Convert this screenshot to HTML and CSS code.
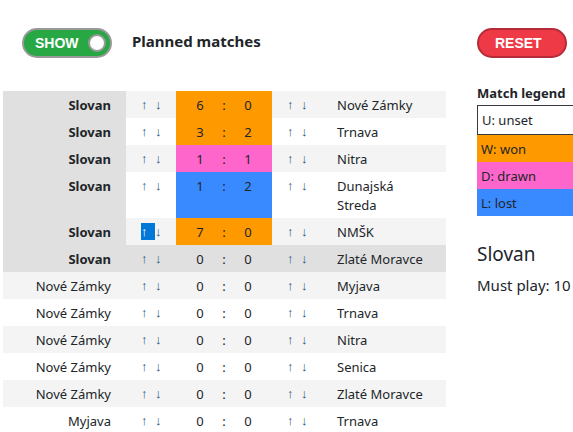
FILE: index.html
```html
<!DOCTYPE html>
<html lang="en">
<head>
<meta charset="utf-8">
<title>Planned matches</title>
<link rel="stylesheet" href="styles.css">
</head>
<body>
<main class="layout">
  <section class="planner">
    <header class="bar">
      <label class="pill show"><span>SHOW</span><input type="checkbox" class="knob" checked></label>
      <h1 class="title">Planned matches</h1>
    </header>
    <table class="matches">
      <colgroup><col class="c-home"><col class="c-move"><col class="c-goals"><col class="c-colon"><col class="c-goals"><col class="c-move-away"><col class="c-away"></colgroup>
      <tbody id="rows"></tbody>
    </table>
  </section>
  <aside class="side">
    <div class="bar"><button type="button" class="pill reset">RESET</button></div>
    <h2 class="legend-title">Match legend</h2>
    <ul class="legend">
      <li class="unset">U: unset</li>
      <li class="won">W: won</li>
      <li class="drawn">D: drawn</li>
      <li class="lost">L: lost</li>
    </ul>
    <h3 class="team">Slovan</h3>
    <p class="must">Must play: 10</p>
  </aside>
</main>
<script src="script.js"></script>
</body>
</html>
```
FILE: styles.css
```css
* {
  box-sizing: border-box;
}

html {
  overflow: hidden;
}

body {
  margin: 0;
  background: #fff;
  color: #212529;
  font-family: "Segoe UI", "Noto Sans", sans-serif;
  font-size: 13px;
  line-height: 19px;
}

h1, h2, h3, p, ul {
  margin: 0;
  padding: 0;
}

.layout {
  display: grid;
  grid-template-columns: 443fr 96fr;
  column-gap: 31px;
  padding: 28px 0 0 3px;
}

.bar {
  display: flex;
  align-items: flex-start;
  gap: 20px;
  height: 30px;
}

.planner .bar {
  padding-left: 19px;
  margin-bottom: 33px;
}

.side .bar {
  margin-bottom: 26px;
}

.title {
  font-size: 15px;
  line-height: 27px;
  font-weight: 700;
}

.pill {
  display: flex;
  align-items: center;
  flex: none;
  width: 90px;
  height: 30px;
  border-radius: 15px;
  color: #fff;
  font-family: "Liberation Sans", sans-serif;
  font-size: 14px;
  font-weight: 700;
}

.show {
  justify-content: space-between;
  padding: 0 4px 0 11px;
  border: 2px solid #999;
  background: #28a745;
}

.knob {
  appearance: none;
  width: 18px;
  height: 18px;
  margin: 0;
  border: 2px solid #999;
  border-radius: 50%;
  background: #fff;
}

.reset {
  padding: 0 0 0 16px;
  border: 2px solid #b52b37;
  background: #ee3a47;
}

.matches {
  width: 100%;
  table-layout: fixed;
  border-collapse: collapse;
}

.c-home { width: 123px; }
.c-move { width: 50px; }
.c-goals { width: 36px; }
.c-colon { width: 24px; }
.c-move-away { width: 57px; }

.matches th,
.matches td {
  padding: 5px 0 3px;
  vertical-align: top;
  text-align: center;
}

.matches .home {
  padding-right: 15px;
  text-align: right;
  font-weight: 400;
}

.matches .move {
  padding-left: 15px;
  text-align: left;
}

.matches .first {
  padding-left: 12px;
}

.matches .last {
  padding-right: 12px;
}

.matches .away {
  padding-left: 8px;
  padding-right: 20px;
  text-align: left;
}

.matches tr:nth-child(odd) {
  background: #f4f4f4;
}

.matches .picked .home {
  background: #e0e0e0;
  font-weight: 700;
}

.matches tr.current {
  background: #e0e0e0;
}

.arrow {
  display: inline-block;
  width: 14px;
  height: 17px;
  color: #23527c;
  font-family: "Liberation Sans", sans-serif;
  font-size: 13px;
  line-height: 17px;
  text-decoration: none;
  vertical-align: top;
}

.marked {
  background: #0078d7;
  color: #fff;
}

.matches .won, .won { background: #ff9900; }
.matches .drawn, .drawn { background: #ff66cc; }
.matches .lost, .lost { background: #3a8aff; }

.legend-title {
  margin-bottom: 2px;
  font-size: 13px;
  line-height: 19px;
}

.legend {
  list-style: none;
}

.legend li {
  padding: 5px 4px 3px;
}

.legend .unset {
  padding-bottom: 4px;
  border: 1px solid #343a40;
  border-right: 0;
}

.team {
  margin: 25px 0 7px;
  font-size: 19px;
  line-height: 27px;
  font-weight: 400;
}

.must {
  font-size: 15px;
  line-height: 21px;
  white-space: nowrap;
}
```
FILE: script.js
```js
const matches = [
  ["Slovan", 6, 0, "Nové Zámky", "won"],
  ["Slovan", 3, 2, "Trnava", "won"],
  ["Slovan", 1, 1, "Nitra", "drawn"],
  ["Slovan", 1, 2, "Dunajská Streda", "lost"],
  ["Slovan", 7, 0, "NMŠK", "won"],
  ["Slovan", 0, 0, "Zlaté Moravce", ""],
  ["Nové Zámky", 0, 0, "Myjava", ""],
  ["Nové Zámky", 0, 0, "Trnava", ""],
  ["Nové Zámky", 0, 0, "Nitra", ""],
  ["Nové Zámky", 0, 0, "Senica", ""],
  ["Nové Zámky", 0, 0, "Zlaté Moravce", ""],
  ["Myjava", 0, 0, "Trnava", ""]
];

const arrows = (marked) =>
  `<a href="#" class="arrow${marked ? " marked" : ""}">↑</a><a href="#" class="arrow">↓</a>`;

document.getElementById("rows").innerHTML = matches.map(([home, a, b, away, state], i) => {
  const row = (home === "Slovan" ? "picked" : "") + (i === 5 ? " current" : "");
  return `<tr class="${row}"><th scope="row" class="home">${home}</th>` +
    `<td class="move">${arrows(i === 4)}</td>` +
    `<td class="first ${state}">${a}</td><td class="${state}">:</td><td class="last ${state}">${b}</td>` +
    `<td class="move">${arrows(false)}</td><td class="away">${away}</td></tr>`;
}).join("");
```
